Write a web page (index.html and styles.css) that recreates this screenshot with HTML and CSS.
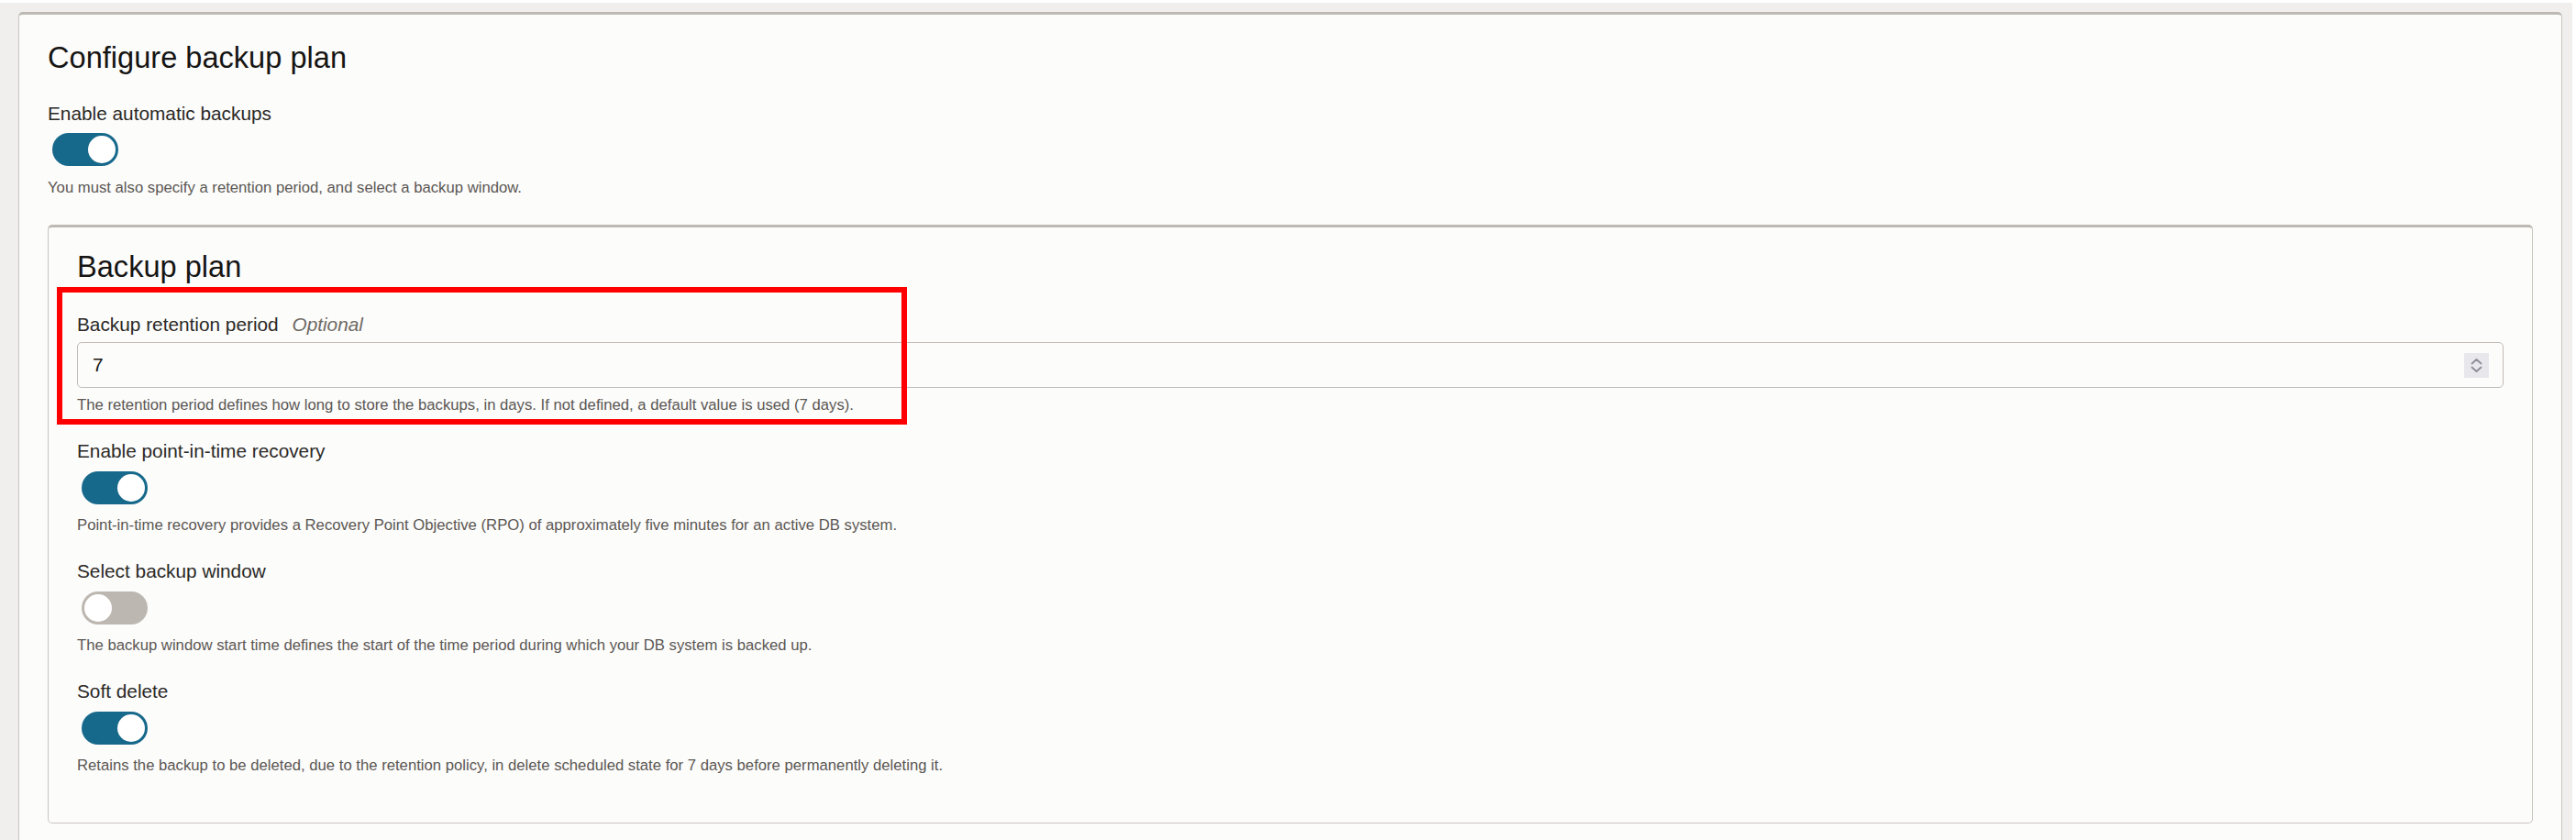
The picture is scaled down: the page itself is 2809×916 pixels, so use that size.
FILE: index.html
```html
<!DOCTYPE html>
<html lang="en">
<head>
<meta charset="utf-8">
<title>Configure backup plan</title>
<link rel="stylesheet" href="styles.css">
</head>
<body>
<div class="page">
  <section class="card outer">
    <h1 class="title">Configure backup plan</h1>
    <div class="field first">
      <div class="label">Enable automatic backups</div>
      <div class="switch on"><span class="knob"></span></div>
      <div class="help">You must also specify a retention period, and select a backup window.</div>
    </div>

    <section class="card inner">
      <h2 class="title sub">Backup plan</h2>
      <div class="highlight"></div>

      <div class="field retention">
        <div class="label">Backup retention period <span class="optional">Optional</span></div>
        <div class="input">
          <span class="value">7</span>
          <span class="spinner">
            <svg width="27" height="27" viewBox="0 0 27 27" aria-hidden="true">
              <path d="M8.5 11.5 L13.5 7 L18.5 11.5" fill="none" stroke="#8b8a96" stroke-width="1.7" stroke-linecap="round" stroke-linejoin="round"/>
              <path d="M8.5 15.5 L13.5 20 L18.5 15.5" fill="none" stroke="#8b8a96" stroke-width="1.7" stroke-linecap="round" stroke-linejoin="round"/>
            </svg>
          </span>
        </div>
        <div class="help tight">The retention period defines how long to store the backups, in days. If not defined, a default value is used (7 days).</div>
      </div>

      <div class="field">
        <div class="label">Enable point-in-time recovery</div>
        <div class="switch on"><span class="knob"></span></div>
        <div class="help">Point-in-time recovery provides a Recovery Point Objective (RPO) of approximately five minutes for an active DB system.</div>
      </div>

      <div class="field">
        <div class="label">Select backup window</div>
        <div class="switch off"><span class="knob"></span></div>
        <div class="help">The backup window start time defines the start of the time period during which your DB system is backed up.</div>
      </div>

      <div class="field">
        <div class="label">Soft delete</div>
        <div class="switch on"><span class="knob"></span></div>
        <div class="help">Retains the backup to be deleted, due to the retention policy, in delete scheduled state for 7 days before permanently deleting it.</div>
      </div>
    </section>
  </section>
</div>
</body>
</html>
```

FILE: styles.css
```css
* { box-sizing: border-box; }

html, body {
  margin: 0;
  padding: 0;
  background: #ffffff;
  font-family: "Liberation Sans", Arial, Helvetica, sans-serif;
  color: #161513;
}

.page {
  margin: 3px 4px 0 0;
  padding: 10px 11px 0 20px;
  background: #f1efed;
  height: 913px;
  overflow: hidden;
}

.card {
  background: #fcfcfb;
  border: 1px solid #c9c4be;
  border-top: 3px solid #bdb8b1;
  border-radius: 5px;
}

.outer {
  padding: 27px 31px 0 31px;
  min-height: 960px;
}

.title {
  margin: 0;
  font-size: 32.6px;
  line-height: 40px;
  font-weight: normal;
  color: #161513;
}

.field { display: flex; flex-direction: column; align-items: flex-start; }
.field.first { margin-top: 29px; }

.label {
  font-size: 20.8px;
  line-height: 24px;
  color: #2b2926;
}

.optional {
  font-style: italic;
  color: #6f6a64;
  margin-left: 9px;
}

.help {
  margin-top: 14px;
  font-size: 16.7px;
  line-height: 20px;
  color: #5b5753;
}
.help.tight { margin-top: 9px; }

.switch {
  margin-top: 9px;
  margin-left: 5px;
  width: 72px;
  height: 36px;
  border-radius: 18px;
  padding: 3px;
  display: flex;
}
.switch .knob {
  width: 30px;
  height: 30px;
  border-radius: 50%;
  background: #ffffff;
}
.switch.on { background: #17698b; justify-content: flex-end; }
.switch.off { background: #bcb7b1; justify-content: flex-start; }

.inner {
  position: relative;
  margin-top: 30px;
  padding: 23px 31px 52px 31px;
}

.highlight {
  position: absolute;
  left: 9px;
  top: 65px;
  width: 927px;
  height: 150px;
  border: 6px solid #ff0000;
  pointer-events: none;
}

.retention { margin-top: 31px; }

.input {
  margin-top: 7px;
  align-self: stretch;
  height: 50px;
  border: 1px solid #c2bdb7;
  border-radius: 5px;
  background: #fcfcfb;
  display: flex;
  align-items: center;
  justify-content: space-between;
  padding: 0 15px 0 16px;
}
.input .value {
  font-size: 20.8px;
  color: #161513;
}
.spinner {
  width: 27px;
  height: 27px;
  background: #e8e7ec;
  display: flex;
}

.inner .field + .field { margin-top: 28px; }
.inner .field .switch { margin-top: 10px; }
.inner .field .help { margin-top: 13px; }
.inner .retention .help { margin-top: 9px; }
```
